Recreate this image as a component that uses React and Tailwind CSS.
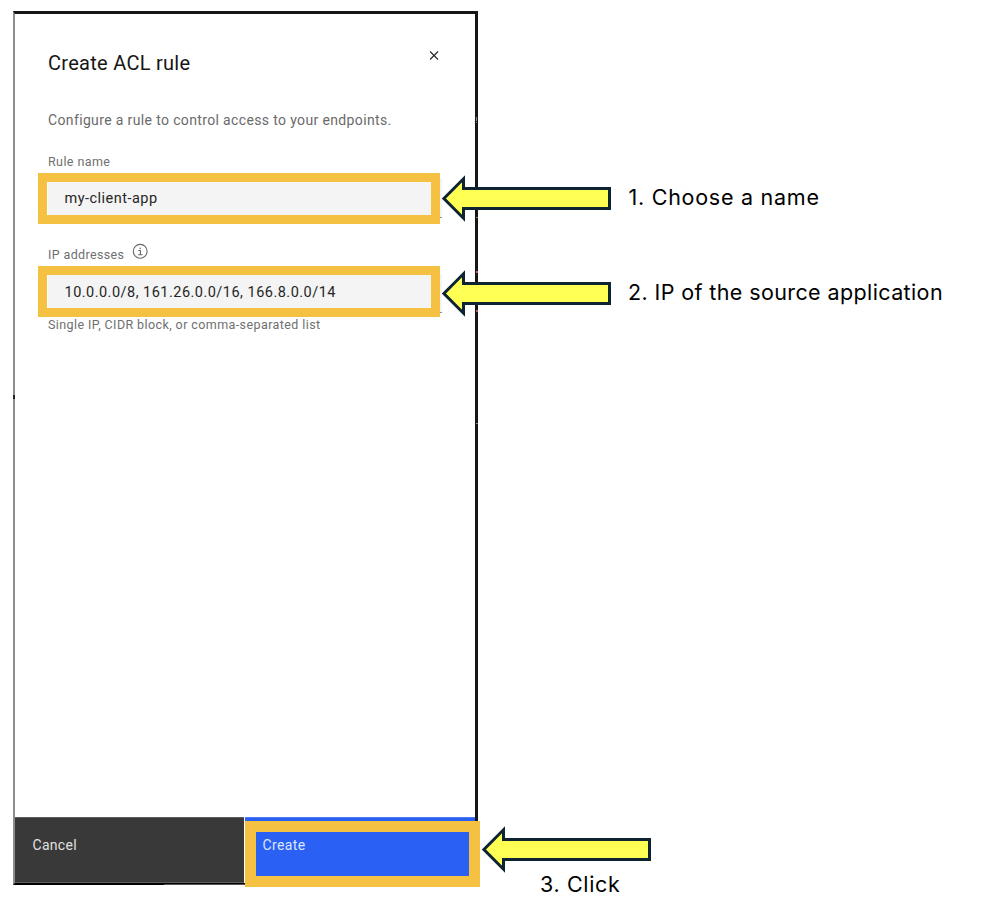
import { clsx } from "clsx";

function Arrow() {
  return (
    <svg className="h-[47px] w-[169px] shrink-0" viewBox="0 0 169 47" aria-hidden="true">
      <path d="M1.9 23.5 21.5 3.8V13.5H167.5V33.5H21.5V43.2Z" fill="#ffff54" stroke="#0e2433" strokeWidth="3" />
    </svg>
  );
}

function Note({ className, children }) {
  return (
    <p className={clsx("whitespace-nowrap font-['Inter',sans-serif] text-[21.5px] leading-7 text-black", className)}>
      {children}
    </p>
  );
}

function Field({ value, className, highlight }) {
  return (
    <div className="relative h-10 w-[394px] border-b border-[#8d8d8d] bg-[#f4f4f4] px-[16.5px]">
      <span className={clsx("block whitespace-nowrap text-[14.5px] tracking-[0.48px] text-[#262626]", className)}>{value}</span>
      <div className={clsx("absolute -left-[10px] h-[51px] w-[402px] border-9 border-[#f5c142]", highlight)} />
    </div>
  );
}

export default function App() {
  return (
    <main className="flex h-[924px] w-[988px] items-start overflow-hidden bg-white pl-[13px] pt-[11px] font-['Roboto',sans-serif]">
      <section className="relative flex h-[874px] w-[465px] shrink-0 flex-col border-b-2 border-l-2 border-r-3 border-t-3 border-b-black border-l-[#8d8d8d] border-r-[#161616] border-t-[#161616]">
        {/* slivers of the page behind the panel */}
        <svg className="absolute -left-0.5 -top-[3px] h-[874px] w-[465px]" viewBox="0 0 465 874" aria-hidden="true">
          <path d="M151 873H232V874H151Z" fill="#555" />
          <path d="M0 384H2V388H0Z" fill="#222" />
          <path d="M463 106H464V110H463ZM463 111H464V112H463ZM463 206H465V207H463ZM463 412H465V413H463Z" fill="#888" />
          <path d="M463 260H465V262H463ZM463 299H465V301H463Z" fill="#c8565b" />
        </svg>
        <div className="flex grow flex-col pl-[33px]">
          <header className="flex items-start justify-between pr-9 pt-[35px]">
            <h1 className="text-xl leading-7 tracking-[0.28px] text-[#161616]">Create ACL rule</h1>
            <svg className="mt-0.5 h-[9px] w-[11px]" viewBox="0 0 11 9" aria-label="Close">
              <path d="M2.1.5 10 8.5M10 .5 2.1 8.5" stroke="#262626" strokeWidth="1.1" />
            </svg>
          </header>
          <p className="mt-[33px] whitespace-nowrap text-sm leading-5 tracking-[0.36px] text-[#6a6a6a]">
            Configure a rule to control access to your endpoints.
          </p>
          <div className="flex flex-col gap-2 pt-6">
            <label className="text-[12.5px] leading-4 tracking-[0.41px] text-[#6f6f6f]">Rule name</label>
            <Field value="my-client-app" className="leading-[42px]" highlight="-top-[5px]" />
          </div>
          <div className="flex flex-col gap-[11px] pt-6">
            <div className="flex h-5 items-start gap-2">
              <label className="pt-[5px] text-[12.5px] leading-4 tracking-[0.36px] text-[#6f6f6f]">IP addresses</label>
              <svg className="mt-px size-4" viewBox="0 0 16 16" fill="none" stroke="#666" aria-hidden="true">
                <circle cx="8.2" cy="8.3" r="6.9" strokeWidth="1.1" />
                <path d="M6.4 7.5H8.4V11.8M6.1 11.8H10.5" strokeWidth="1.1" />
                <circle cx="8.2" cy="5.2" r=".8" fill="#666" stroke="none" />
              </svg>
            </div>
            <Field value="10.0.0.0/8, 161.26.0.0/16, 166.8.0.0/14" className="leading-10" highlight="-top-[7px]" />
          </div>
          <p className="pt-1 whitespace-nowrap text-[12.5px] leading-4 tracking-[0.41px] text-[#6f6f6f]">
            Single IP, CIDR block, or comma-separated list
          </p>
        </div>
        <footer className="flex h-[66px] shrink-0 gap-px">
          <button className="flex w-[229px] items-start border-y border-[#5c5c5c] bg-[#393939] pl-[17.5px] pt-[17px] text-sm leading-5 tracking-[0.3px] text-[#e0e0e0]">
            Cancel
          </button>
          <button className="relative flex w-[230px] items-start border-t border-[#4d7bf8] bg-[#2b60f4] pl-[17.5px] pt-[17px] text-sm leading-5 tracking-[0.4px] text-[#dce6ff]">
            Create
            <span className="absolute left-0 top-[3px] h-[66px] w-[235px] border-11 border-[#f5c142]" />
          </button>
        </footer>
      </section>

      <aside className="z-10 -ml-9 flex h-[913px] flex-col pt-[164px]">
        <div className="flex flex-col gap-12">
          <div className="flex items-center gap-[17.5px]">
            <Arrow />
            <Note className="pb-[3px] tracking-[0.74px]">1. Choose a name</Note>
          </div>
          <div className="flex items-center gap-[17px]">
            <Arrow />
            <Note className="pb-[3px] tracking-[0.39px]">2. IP of the source application</Note>
          </div>
        </div>
        <div className="mt-auto flex flex-col pb-[26px] pl-10">
          <Arrow />
          <Note className="-mt-[3px] pl-[58px] tracking-[0.65px]">3. Click</Note>
        </div>
      </aside>
    </main>
  );
}
